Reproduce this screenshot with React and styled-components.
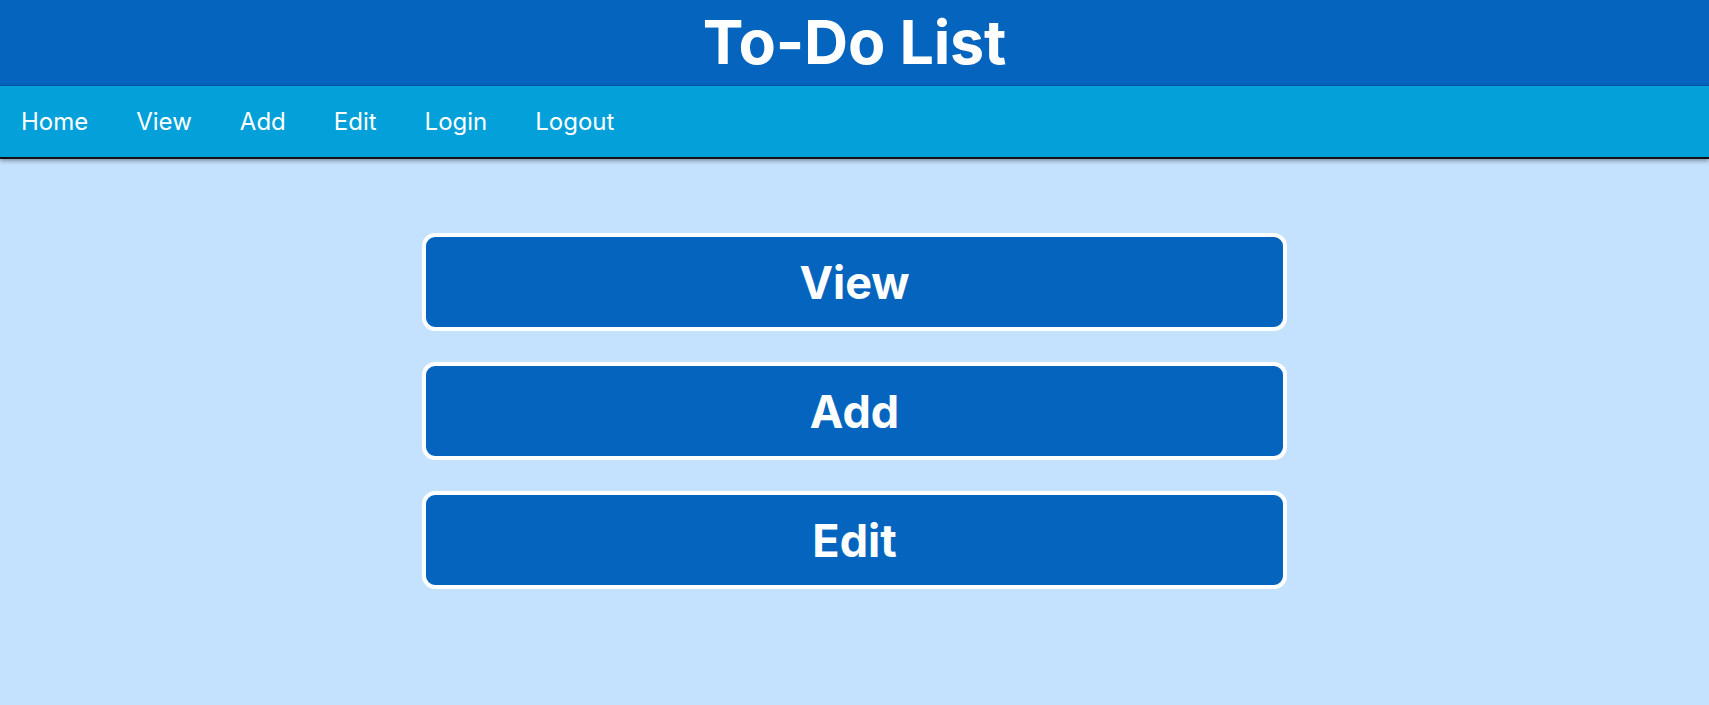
import React from "react";
import styled, { createGlobalStyle } from "styled-components";

const Global = createGlobalStyle`
  html, body { margin: 0; padding: 0; }
  body {
    background: #c4e1fd;
    font-family: Inter, "Noto Sans", sans-serif;
    min-height: 705px;
  }
`;

const Page = styled.div`
  min-height: 705px;
  background: #c4e1fd;
`;

const Header = styled.header`
  height: 85px;
  background: #0565be;
  border-bottom: 1px solid #0556a3;
  display: flex;
  align-items: center;
  justify-content: center;
`;

const Title = styled.h1`
  margin: 0;
  color: #fff;
  font-family: Inter, sans-serif;
  font-weight: 700;
  font-size: 61px;
  line-height: 1;
  letter-spacing: -0.2px;
`;

const Nav = styled.nav`
  height: 71px;
  background: #03a0da;
  border-bottom: 2px solid #111;
  box-shadow: 0 2px 4px rgba(0, 0, 0, 0.35);
  display: flex;
  align-items: center;
  position: relative;
`;

const NavLink = styled.a`
  color: #fff;
  text-decoration: none;
  font-size: 24px;
  font-weight: 400;
  padding: 0 24px;
  line-height: 1;
  cursor: pointer;

  &:first-child {
    padding-left: 21px;
  }
`;

const Main = styled.main`
  display: flex;
  flex-direction: column;
  align-items: center;
  gap: 31px;
  padding-top: 74px;
`;

const BigButton = styled.button`
  box-sizing: border-box;
  width: 865px;
  height: 98px;
  background: #0565be;
  border: 4px solid #fff;
  border-radius: 13px;
  color: #fff;
  font-family: Inter, sans-serif;
  font-weight: 700;
  font-size: 45px;
  display: flex;
  align-items: center;
  justify-content: center;
  cursor: pointer;
  padding: 0;
`;

const links = ["Home", "View", "Add", "Edit", "Login", "Logout"];
const actions = ["View", "Add", "Edit"];

export default function App() {
  return (
    <Page>
      <Global />
      <Header>
        <Title>To-Do List</Title>
      </Header>
      <Nav>
        {links.map((l) => (
          <NavLink key={l}>{l}</NavLink>
        ))}
      </Nav>
      <Main>
        {actions.map((a) => (
          <BigButton key={a}>{a}</BigButton>
        ))}
      </Main>
    </Page>
  );
}
